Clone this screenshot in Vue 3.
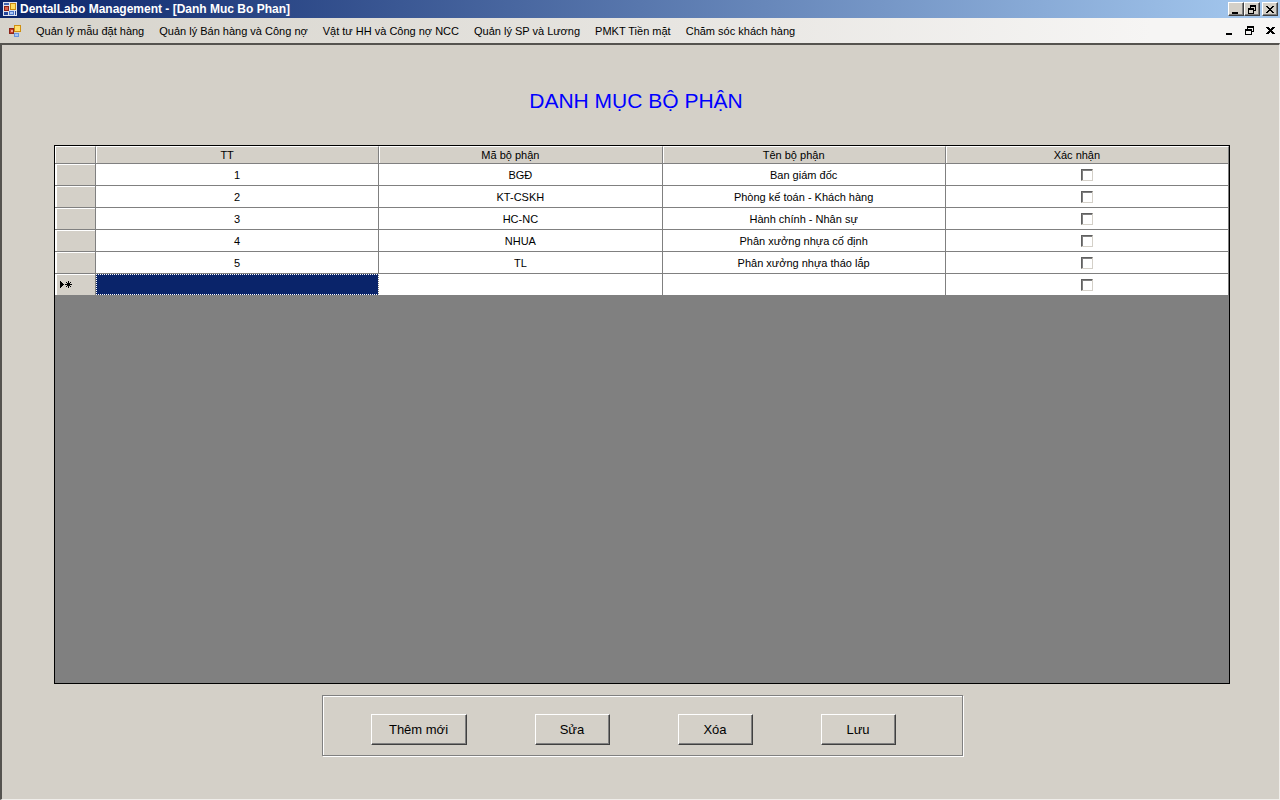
<script setup>
import { ref } from 'vue'

const menus = [
  'Quản lý mẫu đặt hàng',
  'Quản lý Bán hàng và Công nợ',
  'Vật tư HH và Công nợ NCC',
  'Quản lý SP và Lương',
  'PMKT Tiền mặt',
  'Chăm sóc khách hàng'
]

const rows = ref([
  { id: 1, code: 'BGĐ', name: 'Ban giám đốc', ok: false },
  { id: 2, code: 'KT-CSKH', name: 'Phòng kế toán - Khách hàng', ok: false },
  { id: 3, code: 'HC-NC', name: 'Hành chính - Nhân sự', ok: false },
  { id: 4, code: 'NHUA', name: 'Phân xưởng nhựa cố định', ok: false },
  { id: 5, code: 'TL', name: 'Phân xưởng nhựa tháo lắp', ok: false }
])
const newOk = ref(false)
</script>

<template>
  <div class="window">
    <header class="titlebar">
      <svg class="app-icon" width="14" height="14" viewBox="0 0 14 14" shape-rendering="crispEdges" aria-hidden="true">
        <rect width="14" height="14" fill="#dfe3ee" />
        <rect x="1" y="1" width="5" height="2" fill="#3f64b4" />
        <rect x="1" y="4" width="5" height="5" fill="#8c2418" />
        <rect x="2" y="5" width="3" height="3" fill="#d8604a" />
        <rect x="7" y="1" width="6" height="7" fill="#c98a10" />
        <rect x="8" y="2" width="4" height="5" fill="#ffdc60" />
        <rect x="1" y="10" width="4" height="3" fill="#24459a" />
        <rect x="6" y="9" width="5" height="4" fill="#4c78cc" />
        <rect x="7" y="10" width="3" height="2" fill="#a9c6f4" />
        <rect x="12" y="9" width="1" height="4" fill="#24459a" />
      </svg>
      <h1>DentalLabo Management - [Danh Muc Bo Phan]</h1>
      <div class="win-buttons">
        <button type="button" aria-label="Minimize">
          <svg width="10" height="9" viewBox="0 0 10 9" shape-rendering="crispEdges"><path d="M1 7h6v2H1z" /></svg>
        </button>
        <button type="button" aria-label="Restore">
          <svg width="10" height="9" viewBox="0 0 10 9" shape-rendering="crispEdges"><path d="M3 0h6v6H7V5h1V2H4v1H3zM1 3h6v6H1zM2 5v3h4V5z" fill-rule="evenodd" /></svg>
        </button>
        <button type="button" class="close" aria-label="Close">
          <svg width="10" height="9" viewBox="0 0 10 9" shape-rendering="crispEdges"><path d="M1 1h2v1h1v1h2V2h1V1h2v1H8v1H7v1H6v1h1v1h1v1h1v1H7V7H6V6H4v1H3v1H1V7h1V6h1V5h1V4H3V3H2V2H1z" /></svg>
        </button>
      </div>
    </header>

    <nav class="menubar">
      <svg class="form-icon" width="14" height="14" viewBox="0 0 14 14" shape-rendering="crispEdges" aria-hidden="true">
        <rect x="1" y="4" width="5" height="6" fill="#8c2418" />
        <rect x="2" y="5" width="3" height="4" fill="#c83c28" />
        <rect x="3" y="6" width="2" height="2" fill="#f0a090" />
        <rect x="6" y="1" width="7" height="7" fill="#d09010" />
        <rect x="7" y="2" width="5" height="5" fill="#ffe070" />
        <rect x="6" y="9" width="5" height="4" fill="#6a94dc" />
        <rect x="7" y="10" width="3" height="2" fill="#a9c6f4" />
      </svg>
      <a v-for="m in menus" :key="m" href="#" @click.prevent>{{ m }}</a>
      <div class="mdi-buttons">
        <button type="button" aria-label="Minimize form">
          <svg width="9" height="9" viewBox="0 0 9 9" shape-rendering="crispEdges"><path d="M2 7h6v2H2z" /></svg>
        </button>
        <button type="button" aria-label="Restore form">
          <svg width="9" height="9" viewBox="0 0 9 9" shape-rendering="crispEdges"><path d="M2 0h7v6H7V5h1V2H3v1H2zM0 3h7v6H0zM1 5v3h5V5z" fill-rule="evenodd" /></svg>
        </button>
        <button type="button" aria-label="Close form">
          <svg width="9" height="9" viewBox="0 0 9 9" shape-rendering="crispEdges"><path d="M0 1h3v1h1v1h1V2h1V1h3v1H8v1H7v1H6v1h1v1h1v1h1v1H6V7H5V6H4v1H3v1H0V7h1V6h1V5h1V4H2V3H1V2H0z" /></svg>
        </button>
      </div>
    </nav>

    <main class="client">
      <h2>DANH MỤC BỘ PHẬN</h2>

      <div class="grid">
        <table>
          <colgroup>
            <col class="head-col" /><col /><col /><col /><col />
          </colgroup>
          <thead>
            <tr>
              <td class="corner"></td>
              <th scope="col">TT</th>
              <th scope="col">Mã bộ phận</th>
              <th scope="col">Tên bộ phận</th>
              <th scope="col">Xác nhận</th>
            </tr>
          </thead>
          <tbody>
            <tr v-for="r in rows" :key="r.id">
              <td class="row-head"></td>
              <td>{{ r.id }}</td>
              <td>{{ r.code }}</td>
              <td>{{ r.name }}</td>
              <td><input v-model="r.ok" type="checkbox" :aria-label="'Xác nhận ' + r.name" /></td>
            </tr>
            <tr class="new-row">
              <td class="row-head">
                <svg width="14" height="9" viewBox="0 0 14 9" shape-rendering="crispEdges" aria-hidden="true">
                  <path d="M1 1h1v1h1v1h1v1h1v1H4v1H3v1H2v1H1z" />
                  <path d="M9 1h1v2h1V2h1v1h-1v1h2v1h-2v1h1v1h-1V6h-1v2H9V6H8v1H7V6h1V5H6V4h2V3H7V2h1v1h1z" />
                </svg>
              </td>
              <td class="selected"></td>
              <td></td>
              <td></td>
              <td><input v-model="newOk" type="checkbox" aria-label="Xác nhận dòng mới" /></td>
            </tr>
          </tbody>
        </table>
      </div>

      <div class="actions">
        <button type="button" class="wide">Thêm mới</button>
        <button type="button">Sửa</button>
        <button type="button">Xóa</button>
        <button type="button">Lưu</button>
      </div>
    </main>
  </div>
</template>

<style>
body {
  margin: 0;
  background: #d4d0c8;
}
</style>

<style scoped>
.window {
  display: flex;
  flex-direction: column;
  min-height: 100vh;
  box-sizing: border-box;
  background: #d4d0c8;
  color: #000;
  font: 11px/14px "Liberation Sans", Arial, sans-serif;
}

button {
  padding: 0;
  margin: 0;
  font-family: inherit;
  color: #000;
  border-radius: 0;
}

.titlebar {
  display: flex;
  align-items: center;
  height: 18px;
  padding: 0 2px 0 3px;
  background: linear-gradient(to right, #0a246a, #a6caf0);
}

.app-icon {
  margin-right: 3px;
}

h1 {
  margin: 0;
  font-size: 12px;
  line-height: 18px;
  font-weight: bold;
  color: #fff;
}

.win-buttons {
  display: flex;
  margin-left: auto;
}

.win-buttons button {
  display: flex;
  justify-content: center;
  align-items: center;
  width: 16px;
  height: 14px;
  background: #d4d0c8;
  border: 1px solid;
  border-color: #fff #404040 #404040 #fff;
  box-shadow: inset -1px -1px #808080;
}

.win-buttons .close {
  margin-left: 2px;
}

.menubar {
  display: flex;
  align-items: center;
  gap: 15px;
  height: 25px;
  padding: 0 5px 0 8px;
  background: linear-gradient(to right, #d6d3cb, #e6e4e0 50%, #f6f5f4 90%);
}

.form-icon {
  margin-right: -1px;
}

.menubar a {
  color: #000;
  text-decoration: none;
  white-space: nowrap;
}

.mdi-buttons {
  display: flex;
  gap: 12px;
  margin-left: auto;
}

.mdi-buttons button {
  display: flex;
  border: 0;
  background: none;
}

.client {
  flex: 1;
  display: flex;
  flex-direction: column;
  align-items: center;
  padding: 0 49px 43px 52px;
  border: 1px solid #d4d0c8;
  border-top: 2px solid #55534f;
  border-left: 2px solid #55534f;
  border-right-color: #f0eeea;
  border-bottom-color: #f0eeea;
}

h2 {
  margin: 42px 12px 30px 0;
  font-size: 21px;
  line-height: 28px;
  font-weight: normal;
  color: #00f;
}

.grid {
  flex: 1;
  align-self: stretch;
  margin-bottom: 11px;
  background: #808080;
  border: 1px solid #000;
}

table {
  width: 100%;
  table-layout: fixed;
  border-collapse: separate;
  border-spacing: 0;
}

.head-col {
  width: 41px;
}

th,
td {
  box-sizing: border-box;
  height: 22px;
  padding: 0;
  text-align: center;
  vertical-align: middle;
  border-right: 1px solid #808080;
  border-bottom: 1px solid #808080;
  background: #fff;
}

th,
.corner {
  height: 18px;
  font-weight: normal;
  background: #d4d0c8;
  border-top: 1px solid #fff;
  box-shadow: inset 1px 0 #fff;
}

th {
  padding-right: 20px;
}

.row-head {
  background: #d4d0c8;
  box-shadow: inset 2px 1px #fff;
  text-align: left;
  padding-left: 4px;
}

.row-head svg {
  display: block;
}

.new-row td {
  height: 21px;
  border-bottom: 0;
}

.new-row .selected {
  background: #0a246a;
  outline: 1px dotted #fff;
  outline-offset: -1px;
}

input[type="checkbox"] {
  appearance: none;
  display: block;
  width: 12px;
  height: 12px;
  margin: 0 auto;
  background: #fff;
  border: 1px solid;
  border-color: #606060 #d4d0c8 #d4d0c8 #606060;
  box-shadow: inset 1px 1px #808080;
}

input[type="checkbox"]:checked {
  background: linear-gradient(#000, #000) center / 6px 6px no-repeat #fff;
}

.actions {
  display: flex;
  gap: 68px;
  padding: 18px 66px 10px 48px;
  border: 1px solid #808080;
  box-shadow: inset 1px 1px #fff, 1px 1px #fff;
}

.actions button {
  box-sizing: border-box;
  width: 75px;
  height: 31px;
  font-size: 13px;
  line-height: 16px;
  background: #d4d0c8;
  border: 1px solid;
  border-color: #fff #404040 #404040 #fff;
  box-shadow: inset -1px -1px #808080;
}

.actions .wide {
  width: 96px;
}
</style>
